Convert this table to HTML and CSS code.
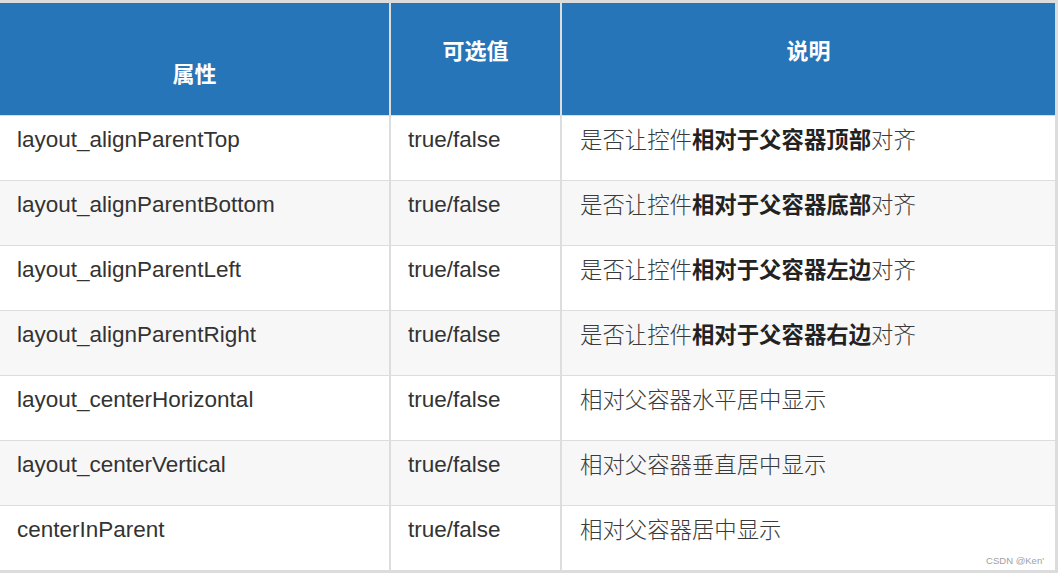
FILE: index.html
```html
<!DOCTYPE html>
<html lang="zh">
<head>
<meta charset="utf-8">
<title>RelativeLayout 属性</title>
<link rel="stylesheet" href="styles.css">
</head>
<body>
<div class="table">
  <div class="th th-low">属性</div>
  <div class="th">可选值</div>
  <div class="th">说明</div>

  <div class="td">layout_alignParentTop</div>
  <div class="td">true/false</div>
  <div class="td cn">是否让控件<b>相对于父容器顶部</b>对齐</div>

  <div class="td alt">layout_alignParentBottom</div>
  <div class="td alt">true/false</div>
  <div class="td alt cn">是否让控件<b>相对于父容器底部</b>对齐</div>

  <div class="td">layout_alignParentLeft</div>
  <div class="td">true/false</div>
  <div class="td cn">是否让控件<b>相对于父容器左边</b>对齐</div>

  <div class="td alt">layout_alignParentRight</div>
  <div class="td alt">true/false</div>
  <div class="td alt cn">是否让控件<b>相对于父容器右边</b>对齐</div>

  <div class="td">layout_centerHorizontal</div>
  <div class="td">true/false</div>
  <div class="td cn">相对父容器水平居中显示</div>

  <div class="td alt">layout_centerVertical</div>
  <div class="td alt">true/false</div>
  <div class="td alt cn">相对父容器垂直居中显示</div>

  <div class="td">centerInParent</div>
  <div class="td">true/false</div>
  <div class="td cn last">相对父容器居中显示<span class="mark">CSDN @Ken'</span></div>
</div>
</body>
</html>
```
FILE: styles.css
```css
html, body {
  margin: 0;
  padding: 0;
  background: #ffffff;
}

.table {
  width: 1055px;
  display: grid;
  grid-template-columns: 389px 169px 493px;
  grid-template-rows: 112px repeat(7, 64px);
  column-gap: 2px;
  row-gap: 1px;
  background: #dddddd;
  border-top: 3px solid #dcdcdc;
  border-right: 3px solid #dcdcdc;
  border-bottom: 3px solid #dcdcdc;
  font-family: "Liberation Sans", Arial, "Noto Sans CJK SC", sans-serif;
  font-size: 22.5px;
  line-height: 30px;
  color: #333333;
}

.th {
  background: #2775b9;
  color: #ffffff;
  font-family: "Noto Sans CJK SC", sans-serif;
  font-weight: 700;
  font-size: 22px;
  text-align: center;
  padding-top: 31px;
  box-sizing: border-box;
}

.th-low {
  padding-top: 54px;
}

.td {
  background: #ffffff;
  padding: 9px 0 0 17px;
  box-sizing: border-box;
  white-space: nowrap;
}

.td.alt {
  background: #f7f7f7;
}

.cn {
  font-family: "Noto Sans CJK SC", sans-serif;
  font-size: 22.4px;
  font-weight: 300;
  color: #3a3a3a;
  padding-top: 7px;
  padding-left: 18px;
}

.cn b {
  font-weight: 700;
  color: #222222;
}

.last {
  display: flex;
  flex-direction: column;
}

.mark {
  margin-top: auto;
  align-self: flex-end;
  margin-right: 11px;
  margin-bottom: 3px;
  font-family: "Liberation Sans", Arial, sans-serif;
  font-weight: 400;
  font-size: 9.5px;
  line-height: 12px;
  color: #a0a0a0;
}
```
